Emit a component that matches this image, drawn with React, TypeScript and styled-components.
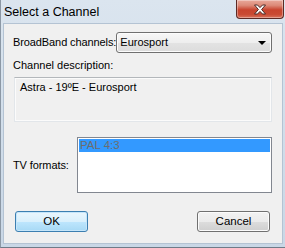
import * as React from "react";
import styled, { createGlobalStyle } from "styled-components";

const GlobalStyle = createGlobalStyle`
  html, body {
    margin: 0;
    padding: 0;
    background: #ffffff;
  }
  body {
    font-family: "Liberation Sans", Arial, sans-serif;
    font-size: 11px;
    color: #000;
  }
`;

const Window = styled.div`
  width: 285px;
  height: 248px;
  box-sizing: border-box;
  display: flex;
  flex-direction: column;
  background: linear-gradient(180deg, #dbe5ef 0%, #d3dfeb 40%, #c9d7e6 100%);
  border-left: 1px solid #8c98a5;
  border-bottom: 1px solid #6f7b88;
  overflow: hidden;
`;

const TitleBar = styled.div`
  height: 23px;
  display: flex;
  align-items: flex-start;
  flex-shrink: 0;
`;

const Title = styled.span`
  padding: 4px 0 0 3px;
  font-size: 12.5px;
  line-height: 16px;
  color: #000;
`;

const CloseButton = styled.button`
  margin-left: auto;
  margin-right: 1px;
  width: 48px;
  height: 19px;
  box-sizing: border-box;
  border: 1px solid #5c2a25;
  border-top: none;
  border-radius: 0 0 4px 4px;
  background: linear-gradient(180deg, #e9a99b 0%, #dc8a78 30%, #c8442e 55%, #c94a33 80%, #d8735c 100%);
  box-shadow: inset 0 0 0 1px rgba(255, 255, 255, 0.35);
  display: flex;
  align-items: center;
  justify-content: center;
  padding: 0;
`;

const Client = styled.div`
  flex: 1;
  margin: 0 2px 3px 2px;
  background: #f0f0f0;
  border: 1px solid #b4c3d3;
  display: flex;
  flex-direction: column;
  padding: 8px 9px 0 9px;
`;

const Row = styled.div`
  display: flex;
  align-items: center;
`;

const Label = styled.span`
  white-space: nowrap;
  line-height: 15px;
  letter-spacing: -0.1px;
`;

const Combo = styled.div`
  flex-shrink: 0;
  width: 156px;
  height: 21px;
  box-sizing: border-box;
  margin-left: auto;
  margin-right: 1px;
  border: 1px solid #707070;
  border-radius: 3px;
  background: linear-gradient(180deg, #f7f7f7 0%, #eeeeee 50%, #e3e3e3 51%, #dcdcdc 100%);
  box-shadow: inset 0 0 0 1px #fcfcfc;
  display: flex;
  align-items: center;
  padding: 0 5px 0 3px;
`;

const ComboText = styled.span`
  flex: 1;
  line-height: 15px;
`;

const Arrow = styled.span`
  width: 0;
  height: 0;
  border-left: 4px solid transparent;
  border-right: 4px solid transparent;
  border-top: 4px solid #000;
`;

const SectionLabel = styled.div`
  margin-top: 5px;
  line-height: 15px;
`;

const DescBox = styled.div`
  margin: 4px 1px 0 1px;
  height: 45px;
  box-sizing: border-box;
  border: 1px solid #e2e6ea;
  border-top-color: #b3b7bb;
  box-shadow: inset 0 0 0 1px #fbfbfb;
  background: #f0f0f0;
  padding: 2px 5px;
  line-height: 15px;
`;

const FormatsRow = styled.div`
  margin-top: 15px;
  display: flex;
  align-items: center;
`;

const ListBox = styled.div`
  flex-shrink: 0;
  margin-left: auto;
  margin-right: 1px;
  width: 195px;
  height: 56px;
  box-sizing: border-box;
  border: 1px solid #828790;
  background: #fff;
  padding: 1px;
`;

const ListItem = styled.div<{ $selected?: boolean }>`
  height: 13px;
  line-height: 13px;
  padding-left: 1px;
  font-size: 11.5px;
  background: ${(p) => (p.$selected ? "#3399ff" : "transparent")};
  color: ${(p) => (p.$selected ? "#6d6d6d" : "#000")};
`;

const Buttons = styled.div`
  margin-top: 18px;
  display: flex;
  justify-content: space-between;
  padding: 0 3px 0 2px;
`;

const Button = styled.button<{ $default?: boolean }>`
  width: 73px;
  height: 21px;
  box-sizing: border-box;
  border-radius: 3px;
  border: 1px solid ${(p) => (p.$default ? "#3c7fb1" : "#707070")};
  background: ${(p) =>
    p.$default
      ? "linear-gradient(180deg, #eaf6fd 0%, #d9f0fc 50%, #bee6fd 51%, #a7d9f5 100%)"
      : "linear-gradient(180deg, #f2f2f2 0%, #ebebeb 50%, #dddddd 51%, #cfcfcf 100%)"};
  box-shadow: inset 0 0 0 1px ${(p) => (p.$default ? "#c6e6fa" : "#fbfbfb")};
  font-family: inherit;
  font-size: 11.5px;
  color: #000;
  padding: 0;
  line-height: 15px;
`;

function CloseIcon() {
  return (
    <svg width="14" height="11" viewBox="0 0 14 11">
      <path
        d="M1.5 1 L4.5 1 L7 3.6 L9.5 1 L12.5 1 L8.6 5.5 L12.5 10 L9.5 10 L7 7.4 L4.5 10 L1.5 10 L5.4 5.5 Z"
        fill="#ffffff"
        stroke="#4a2a26"
        strokeWidth="1"
        strokeLinejoin="round"
      />
    </svg>
  );
}

export default function App() {
  return (
    <>
      <GlobalStyle />
      <Window>
        <TitleBar>
          <Title>Select a Channel</Title>
          <CloseButton aria-label="Close">
            <CloseIcon />
          </CloseButton>
        </TitleBar>
        <Client>
          <Row>
            <Label>BroadBand channels:</Label>
            <Combo>
              <ComboText>Eurosport</ComboText>
              <Arrow />
            </Combo>
          </Row>
          <SectionLabel>Channel description:</SectionLabel>
          <DescBox>Astra - 19ºE - Eurosport</DescBox>
          <FormatsRow>
            <Label>TV formats:</Label>
            <ListBox>
              <ListItem $selected>PAL 4:3</ListItem>
            </ListBox>
          </FormatsRow>
          <Buttons>
            <Button $default>OK</Button>
            <Button>Cancel</Button>
          </Buttons>
        </Client>
      </Window>
    </>
  );
}
